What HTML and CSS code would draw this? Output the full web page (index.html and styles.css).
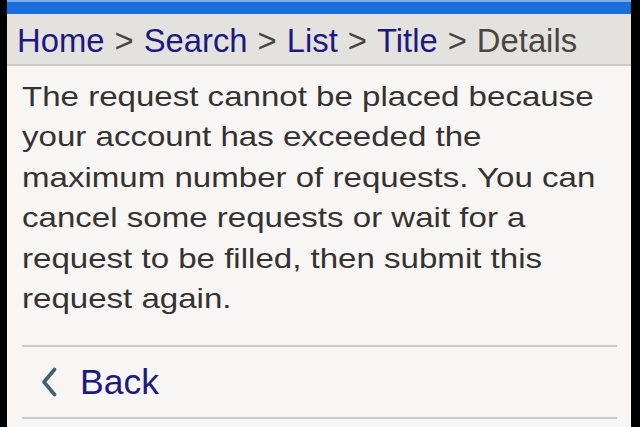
FILE: index.html
```html
<!DOCTYPE html>
<html>
<head>
<meta charset="utf-8">
<link rel="stylesheet" href="styles.css">
</head>
<body>
<div class="screen">
  <div class="topbar"></div>
  <nav class="crumbs">
    <a class="crumb-link">Home</a><span class="sep">&gt;</span><a class="crumb-link">Search</a><span class="sep">&gt;</span><a class="crumb-link">List</a><span class="sep">&gt;</span><a class="crumb-link">Title</a><span class="sep">&gt;</span><span class="crumb-current">Details</span>
  </nav>
  <main class="content">
    <p class="message">The request cannot be placed because your account has exceeded the maximum number of requests. You can cancel some requests or wait for a request to be filled, then submit this request again.</p>
    <div class="back-row">
      <svg class="chevron" width="16" height="30" viewBox="0 0 16 30"><path d="M13.5 2.5 L3 15 L13.5 27.5" fill="none" stroke="#3f6275" stroke-width="3.6" stroke-linecap="round" stroke-linejoin="round"/></svg>
      <span class="back-label">Back</span>
    </div>
  </main>
</div>
</body>
</html>
```
FILE: styles.css
```css
html, body {
  margin: 0;
  padding: 0;
  background: #000;
  height: 100%;
}
body {
  font-family: "Liberation Sans", Arial, sans-serif;
  overflow: hidden;
}
.screen {
  margin-left: 7px;
  width: 624px;
  height: 427px;
  background: #f7f6f5;
  display: flex;
  flex-direction: column;
}
.topbar {
  height: 12px;
  border-top: 2px solid #7aaeea;
  background: #1b6ddb;
}
.crumbs {
  height: 47px;
  padding-top: 3px;
  background: #e4e2df;
  border-bottom: 2px solid #cdcac6;
  display: flex;
  align-items: center;
  padding-left: 10px;
  font-size: 32.8px;
  white-space: nowrap;
}
.crumb-link {
  color: #1c1a7e;
}
.sep {
  color: #4a4540;
  margin: 0 10px;
}
.crumb-current {
  color: #4a4540;
}
.content {
  padding: 10px 14px 0 15px;
}
.message {
  margin: 0;
  width: 514px;
  font-size: 28.5px;
  line-height: 40.4px;
  color: #36322f;
  transform: scaleX(1.16);
  transform-origin: left top;
}
.back-row {
  margin-top: 27px;
  border-top: 2px solid #cdcbc8;
  border-bottom: 2px solid #cdcbc8;
  height: 70px;
  display: flex;
  align-items: center;
  padding-left: 19px;
}
.chevron {
  margin-right: 23px;
}
.back-label {
  color: #1c1a7e;
  font-size: 35.5px;
}
```
